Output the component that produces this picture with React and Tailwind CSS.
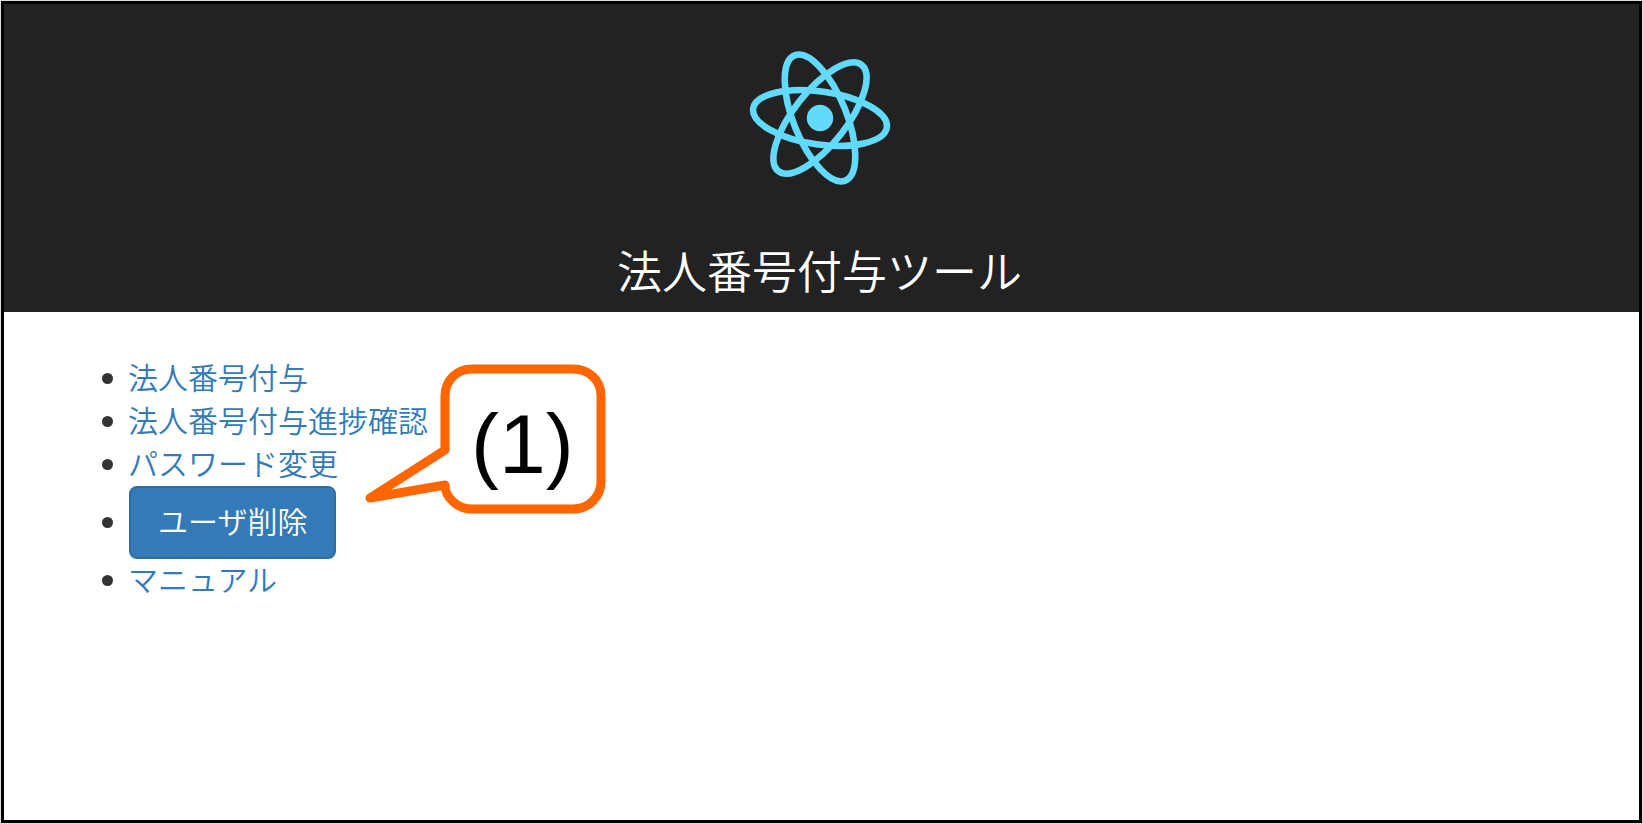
const menu = [
  { label: "法人番号付与", href: "#assign" },
  { label: "法人番号付与進捗確認", href: "#progress" },
  { label: "パスワード変更", href: "#password" },
  { label: "ユーザ削除" },
  { label: "マニュアル", href: "#manual" },
];

function ReactLogo() {
  return (
    <svg
      viewBox="-84 -84 168 168"
      className="size-42"
      role="img"
      aria-label="logo"
    >
      <circle r="13.2" fill="#61dafb" />
      <g fill="none" stroke="#61dafb" strokeWidth="6.6">
        <ellipse rx="67.5" ry="26.5" transform="rotate(8)" />
        <ellipse rx="67.5" ry="26.5" transform="rotate(68)" />
        <ellipse rx="67.5" ry="26.5" transform="rotate(128)" />
      </g>
    </svg>
  );
}

function MenuItem({ label, href }) {
  return (
    <li className="flex items-center gap-[15px] before:size-[11px] before:rounded-full before:bg-[#333]">
      {href ? (
        <a
          href={href}
          className="pb-1 leading-[39px] text-[#337ab7] hover:underline"
        >
          {label}
        </a>
      ) : (
        <button
          type="button"
          className="ml-px rounded-lg border-2 border-[#2e6da4] bg-[#337ab7] px-[27px] pt-[11px] pb-[15px] leading-[43px] text-white"
        >
          {label}
        </button>
      )}
    </li>
  );
}

function Callout() {
  return (
    <div className="absolute top-[356px] left-[360px] h-[158px] w-[246px]">
      <svg
        viewBox="0 0 246 158"
        className="absolute inset-0 size-full"
        aria-hidden="true"
      >
        <path
          d="M81 36C81 20 93 9 108 9H209C225 9 237 20 237 36V121C237 137 225 149 209 149H108C93 149 81 137 81 125L6 138L81 90Z"
          fill="#fff"
          stroke="#ff6600"
          strokeWidth="9"
          strokeLinejoin="round"
        />
      </svg>
      <p className="relative pt-[42px] pl-[107px] font-['Liberation_Sans',Arial,sans-serif] text-[84px] leading-[84px] font-normal text-black">
        (1)
      </p>
    </div>
  );
}

export default function App() {
  return (
    <div className="min-h-screen bg-[#d8dcda] p-px font-['Noto_Sans_CJK_JP',sans-serif] font-[350]">
      <div className="relative min-h-[calc(100vh-2px)] border-3 border-black bg-white">
        <header className="flex flex-col items-center bg-[#222] pt-[30px] pr-1 pb-[10px] text-white">
          <ReactLogo />
          <h1 className="mt-[35px] text-[45px] leading-[65px] font-[350]">
            法人番号付与ツール
          </h1>
        </header>
        <main className="pt-[45px] pl-[98px]">
          <ul className="text-[30px]">
            {menu.map((item) => (
              <MenuItem key={item.label} {...item} />
            ))}
          </ul>
        </main>
        <Callout />
      </div>
    </div>
  );
}
